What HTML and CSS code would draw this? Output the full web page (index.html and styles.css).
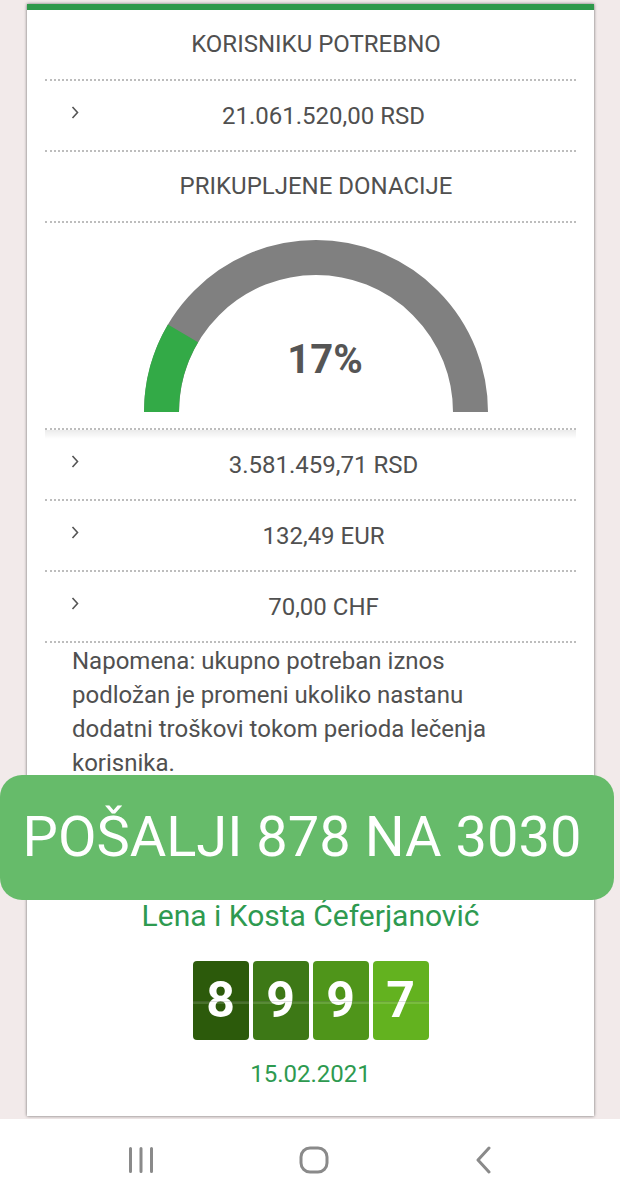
FILE: index.html
```html
<!DOCTYPE html>
<html lang="sr">
<head>
    <meta charset="UTF-8">
    <meta name="viewport" content="width=device-width, initial-scale=1.0">
    <title>Prikupljene donacije</title>
    <link rel="stylesheet" href="styles.css">
</head>
<body>
    <div class="page">
        <div class="card">
            <div class="label">KORISNIKU POTREBNO</div>
            <div class="row">
                <svg class="chev" width="8" height="13" viewBox="0 0 8 13"><polyline points="1.5,1 6.5,6.5 1.5,12" /></svg>
                <span class="amount">21.061.520,00 RSD</span>
            </div>
            <div class="label">PRIKUPLJENE DONACIJE</div>
            <div class="gauge">
                <svg width="530" height="205" viewBox="0 0 530 205">
                    <path class="arc-bg" d="M 116.5 189 A 154.5 154.5 0 0 1 425.5 189" />
                    <path class="arc-fill" d="M 116.5 189 A 154.5 154.5 0 0 1 138 110.4" />
                    <text class="percent" x="280" y="150" text-anchor="middle">17%</text>
                </svg>
            </div>
            <div class="row">
                <svg class="chev" width="8" height="13" viewBox="0 0 8 13"><polyline points="1.5,1 6.5,6.5 1.5,12" /></svg>
                <span class="amount">3.581.459,71 RSD</span>
            </div>
            <div class="row">
                <svg class="chev" width="8" height="13" viewBox="0 0 8 13"><polyline points="1.5,1 6.5,6.5 1.5,12" /></svg>
                <span class="amount">132,49 EUR</span>
            </div>
            <div class="row">
                <svg class="chev" width="8" height="13" viewBox="0 0 8 13"><polyline points="1.5,1 6.5,6.5 1.5,12" /></svg>
                <span class="amount">70,00 CHF</span>
            </div>
            <p class="note">Napomena: ukupno potreban iznos podložan je promeni ukoliko nastanu dodatni troškovi tokom perioda lečenja korisnika.</p>

            <div class="name">Lena i Kosta Ćeferjanović</div>
            <div class="counter">
                <span class="digit d1">8</span>
                <span class="digit d2">9</span>
                <span class="digit d3">9</span>
                <span class="digit d4">7</span>
            </div>
            <div class="date">15.02.2021</div>
        </div>
    </div>

    <div class="sms-banner">POŠALJI 878 NA 3030</div>

    <nav class="navbar">
        <svg width="26" height="26" viewBox="0 0 26 26"><path d="M2.5 1.5 V24.5 M13 1.5 V24.5 M23.5 1.5 V24.5" /></svg>
        <svg width="30" height="28" viewBox="0 0 30 28"><rect x="2" y="2" width="26" height="24" rx="9" /></svg>
        <svg width="18" height="28" viewBox="0 0 18 28"><polyline points="15,2 4,14 15,26" /></svg>
    </nav>
</body>
</html>
```

FILE: styles.css
```css
body {
    margin: 0;
    background: #f2eaea;
    font-family: Roboto, "Liberation Sans", Arial, sans-serif;
    color: #505050;
    position: relative;
}
.page {
    padding: 0 26px 0 27px;
}
.card {
    margin-top: 4px;
    background: #fff;
    border-top: 6px solid #2f994b;
    box-shadow: 0 0 3px rgba(0, 0, 0, 0.55);
    padding: 0 18px 28px;
}
.label {
    height: 69px;
    line-height: 69px;
    text-align: center;
    font-size: 24px;
    padding-left: 11px;
    border-bottom: 2px dotted #bdbdbd;
}
.row {
    display: flex;
    align-items: center;
    height: 69px;
    border-bottom: 2px dotted #bdbdbd;
}
.chev {
    margin-left: 26px;
    margin-top: -6px;
    flex: none;
}
.chev polyline {
    fill: none;
    stroke: #555;
    stroke-width: 1.6;
}
.amount {
    flex: 1;
    margin-left: -8px;
    text-align: center;
    font-size: 24px;
}
.gauge {
    height: 205px;
    border-bottom: 2px dotted #bdbdbd;
    position: relative;
}
.gauge::after {
    content: "";
    position: absolute;
    left: 0;
    right: 0;
    top: 207px;
    height: 9px;
    background: linear-gradient(rgba(0, 0, 0, 0.08), rgba(0, 0, 0, 0));
}
.gauge svg {
    display: block;
}
.arc-bg {
    fill: none;
    stroke: #808080;
    stroke-width: 35;
}
.arc-fill {
    fill: none;
    stroke: #33aa47;
    stroke-width: 35;
}
.percent {
    font-family: Roboto, "Liberation Sans", Arial, sans-serif;
    font-weight: bold;
    font-size: 40px;
    fill: #555;
}
.note {
    margin: 0;
    padding: 1px 0 0 27px;
    width: 440px;
    font-size: 24px;
    line-height: 34px;
}
.name {
    margin-top: 118px;
    text-align: center;
    color: #2e9a50;
    font-size: 30px;
    line-height: 36px;
}
.counter {
    display: flex;
    justify-content: center;
    gap: 4px;
    margin-top: 27px;
}
.digit {
    width: 56px;
    height: 79px;
    line-height: 79px;
    border-radius: 4px;
    text-align: center;
    color: #fff;
    font-weight: bold;
    font-size: 50px;
    position: relative;
}
.digit::after {
    content: "";
    position: absolute;
    left: 0;
    right: 0;
    top: 40px;
    height: 2px;
    background: rgba(255, 255, 255, 0.14);
    border-top: 1px solid rgba(0, 0, 0, 0.12);
}
.d1 { background: #2c5a0b; }
.d2 { background: #3d7816; }
.d3 { background: #4f951a; }
.d4 { background: #63b21f; }
.date {
    margin-top: 20px;
    text-align: center;
    color: #2e9a50;
    font-size: 24px;
    line-height: 28px;
}
.sms-banner {
    position: absolute;
    top: 775px;
    left: 0;
    width: 614px;
    height: 125px;
    border-radius: 22px;
    background: #66bb6a;
    color: #fff;
    font-size: 56px;
    line-height: 125px;
    text-align: center;
    padding-right: 10px;
    box-sizing: border-box;
}
.navbar {
    margin-top: 3px;
    height: 82px;
    background: #fff;
    display: flex;
    justify-content: center;
    align-items: center;
    gap: 145px;
}
.navbar svg {
    fill: none;
    stroke: #8a8a8a;
    stroke-width: 3;
    stroke-linecap: round;
    stroke-linejoin: round;
}
```
